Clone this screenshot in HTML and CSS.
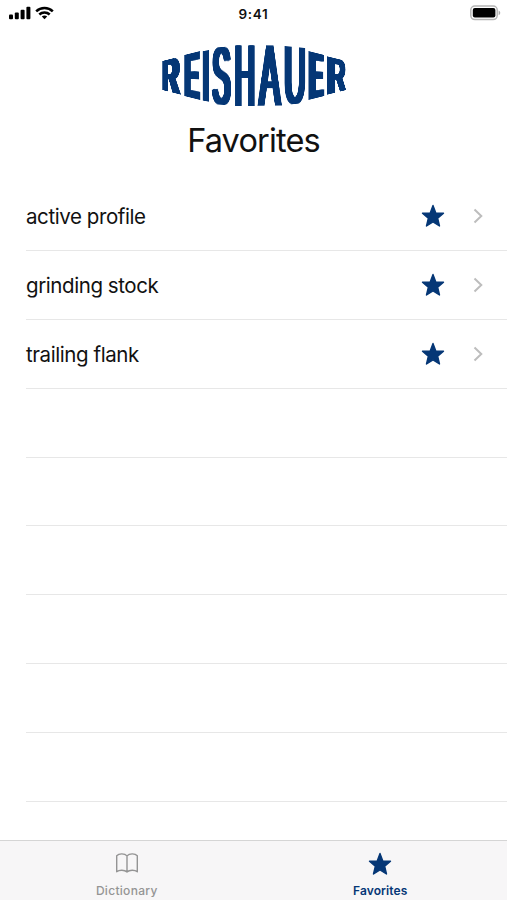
FILE: index.html
```html
<!DOCTYPE html>
<html lang="en">
<head>
<meta charset="utf-8">
<title>Favorites</title>
<link rel="stylesheet" href="styles.css">
</head>
<body>
<svg width="0" height="0" class="defs">
  <symbol id="star" viewBox="0 0 24 24"><path d="M12 1.4 14.8 9 22.5 9.2 16.7 14.3 18.5 22 12 17.8 5.5 22 7.3 14.3 1.5 9.2 9.2 9Z" fill="currentColor" stroke="currentColor" stroke-width="1.4" stroke-linejoin="round"/></symbol>
  <symbol id="chevron" viewBox="0 0 10 16"><path d="M1.5 1.5 8.3 8 1.5 14.5" fill="none" stroke="currentColor" stroke-width="2"/></symbol>
</svg>
<div class="screen">
  <header class="status">
    <div class="signals">
      <svg width="22" height="14" viewBox="0 0 22 14"><rect x="0" y="8.6" width="4" height="4.6" rx="1"/><rect x="5.8" y="6.6" width="4" height="6.6" rx="1"/><rect x="11.6" y="3.8" width="4" height="9.4" rx="1"/><rect x="17.4" y="0.8" width="4" height="12.4" rx="1"/></svg>
      <svg width="19" height="14" viewBox="0 0 19 14" fill="none" stroke="#000" stroke-width="2.5"><path d="M1.2 5.3C5.8 .8 13.2 .8 17.8 5.3"/><path d="M4.3 8.5C7.2 5.7 11.8 5.7 14.7 8.5"/><path d="M9.5 13.3 6.8 10.6C8.3 9.2 10.7 9.2 12.2 10.6Z" fill="#000" stroke="none"/></svg>
    </div>
    <div class="time">9:41</div>
    <svg class="battery" width="31" height="16" viewBox="0 0 31 16"><rect x=".8" y="1" width="26.4" height="13.6" rx="4" fill="#fff" stroke="#b5b5b5" stroke-width="1.5"/><rect x="2.8" y="3" width="22.6" height="9.6" rx="2" fill="#000"/><path d="M28.6 5.4C30.8 6.3 30.8 9.3 28.6 10.2Z" fill="#aaa"/></svg>
  </header>
  <div class="logo" aria-label="REISHAUER"></div>
  <h1>Favorites</h1>
  <ul class="list">
    <li><span class="name">active profile</span><svg class="star"><use href="#star"/></svg><svg class="chev"><use href="#chevron"/></svg></li>
    <li><span class="name">grinding stock</span><svg class="star"><use href="#star"/></svg><svg class="chev"><use href="#chevron"/></svg></li>
    <li><span class="name">trailing flank</span><svg class="star"><use href="#star"/></svg><svg class="chev"><use href="#chevron"/></svg></li>
    <li></li><li></li><li></li><li></li><li></li><li></li>
  </ul>
  <nav class="tabs">
    <div class="tab">
      <svg width="24" height="22" viewBox="0 0 24 22" fill="none" stroke="currentColor" stroke-width="1.4" stroke-linejoin="round"><path d="M12 3.9C9.6 1.3 4 1.3 1.7 3.7V19.7C4.2 17.7 9.5 17.7 12 19.9 14.5 17.7 19.8 17.7 22.3 19.7V3.7C20 1.3 14.4 1.3 12 3.9ZM12 3.9V19.9"/></svg>
      <span>Dictionary</span>
    </div>
    <div class="tab active">
      <svg width="24" height="24"><use href="#star"/></svg>
      <span>Favorites</span>
    </div>
  </nav>
</div>
<script src="logo.js"></script>
</body>
</html>
```
FILE: logo.js
```js
// Each letter is fitted to a trapezoid: [letter, left, width, left height, right height, stem, weight]
const letters = [
  ['R', -0.2, 19, 29, 38.5, 6.8, 700],
  ['E', 21.8, 16, 41, 49, 6.8, 700],
  ['I', 40, 6.8, 50, 52.5, 6.8, 700],
  ['S', 49, 20, 57, 60, 6.9, 400],
  ['H', 72.5, 20, 60.5, 60.5, 6.7, 400],
  ['A', 94.8, 24.8, 60.5, 60, 7, 400],
  ['U', 121.8, 21, 59, 55, 6.8, 400],
  ['E', 145.8, 16, 49, 41, 6.8, 700],
  ['R', 164.4, 19.4, 38.5, 29, 6.8, 700]
];
const logo = document.querySelector('.logo');
const ctx = document.createElement('canvas').getContext('2d');
for (const [ch, left, X, h0, h1, t, weight] of letters) {
  ctx.font = weight + ' 100px "Liberation Sans"';
  const m = ctx.measureText(ch);
  const inkL = -m.actualBoundingBoxLeft;
  const W = m.actualBoundingBoxRight - inkL;
  const up = m.actualBoundingBoxAscent;
  const H = up + m.actualBoundingBoxDescent;
  const stem = weight === 700 ? 14 : 9.4;
  const d = ch === 'I' ? 0 : Math.max(0, (t * W - stem * X) / (X - t));
  const F = W + d;
  const g = (h0 / h1 - 1) / F;
  const p = X * h0 / (h1 * F);
  const q = h0 / H;
  const base = m.fontBoundingBoxAscent + (100 - m.fontBoundingBoxAscent - m.fontBoundingBoxDescent) / 2;
  const el = document.createElement('span');
  el.textContent = ch;
  el.style.fontWeight = weight;
  const shadows = [];
  for (let i = 1; i <= 6; i++) shadows.push((d * i / 6).toFixed(2) + 'px 0 0 currentColor');
  if (d > 0) el.style.textShadow = shadows.join(',');
  const cy = base - up + H / 2;
  el.style.transform = `translate(${left}px, 30.5px) matrix3d(${p},0,0,${g},0,${q},0,0,0,0,1,0,0,0,0,1) translate(${-inkL}px, ${-cy}px)`;
  logo.appendChild(el);
}
```
FILE: styles.css
```css
* { box-sizing: border-box; }
body { margin: 0; background: #fff; color: #111; font-family: Inter, "Liberation Sans", sans-serif; }
.defs { display: block; }
.screen { width: 507px; height: 900px; display: flex; flex-direction: column; overflow: hidden; }
.status { height: 28px; flex: none; display: grid; grid-template-columns: 1fr auto 1fr; padding: 6px 6px 0 9px; align-items: start; }
.signals { display: flex; gap: 4px; }
.time { font-size: 13.5px; line-height: 16px; font-weight: 600; letter-spacing: .7px; margin-right: 3px; }
.battery { justify-self: end; margin-top: -1px; }
.logo { position: relative; width: 184px; height: 61px; margin: 17px auto 0; flex: none; color: #053776; transform: translateX(.5px); }
.logo span { position: absolute; left: 0; top: 0; font: 100px/100px "Liberation Sans", sans-serif; transform-origin: 0 0; white-space: nowrap; }
h1 { margin: 15px 0 0; height: 40px; flex: none; font-size: 32.5px; line-height: 40px; font-weight: 400; letter-spacing: -.85px; text-align: center; }
.list { list-style: none; margin: 21.4px 0 0 26px; padding: 0; flex: none; }
.list li { height: 68.8px; display: flex; align-items: center; border-bottom: 1.5px solid #e7e7e7; padding-right: 24px; }
.name { flex: 1; font-size: 20.5px; line-height: 28px; letter-spacing: -.42px; padding-top: 2px; }
.star { width: 24px; height: 24px; color: #053776; margin-right: 28px; }
.chev { width: 10px; height: 16px; color: #bdbdbd; }
.tabs { margin-top: auto; height: 60px; flex: none; display: flex; border-top: 1px solid #d5d5d5; background: #f7f6f7; }
.tab { flex: 1; display: flex; flex-direction: column; align-items: center; padding-top: 11px; color: #949494; font-size: 12px; line-height: 16px; font-weight: 500; letter-spacing: .3px; }
.tab svg { flex: none; }
.tab span { margin-top: auto; margin-bottom: 1px; }
.tab.active { color: #053776; font-weight: 600; letter-spacing: .1px; }
```
